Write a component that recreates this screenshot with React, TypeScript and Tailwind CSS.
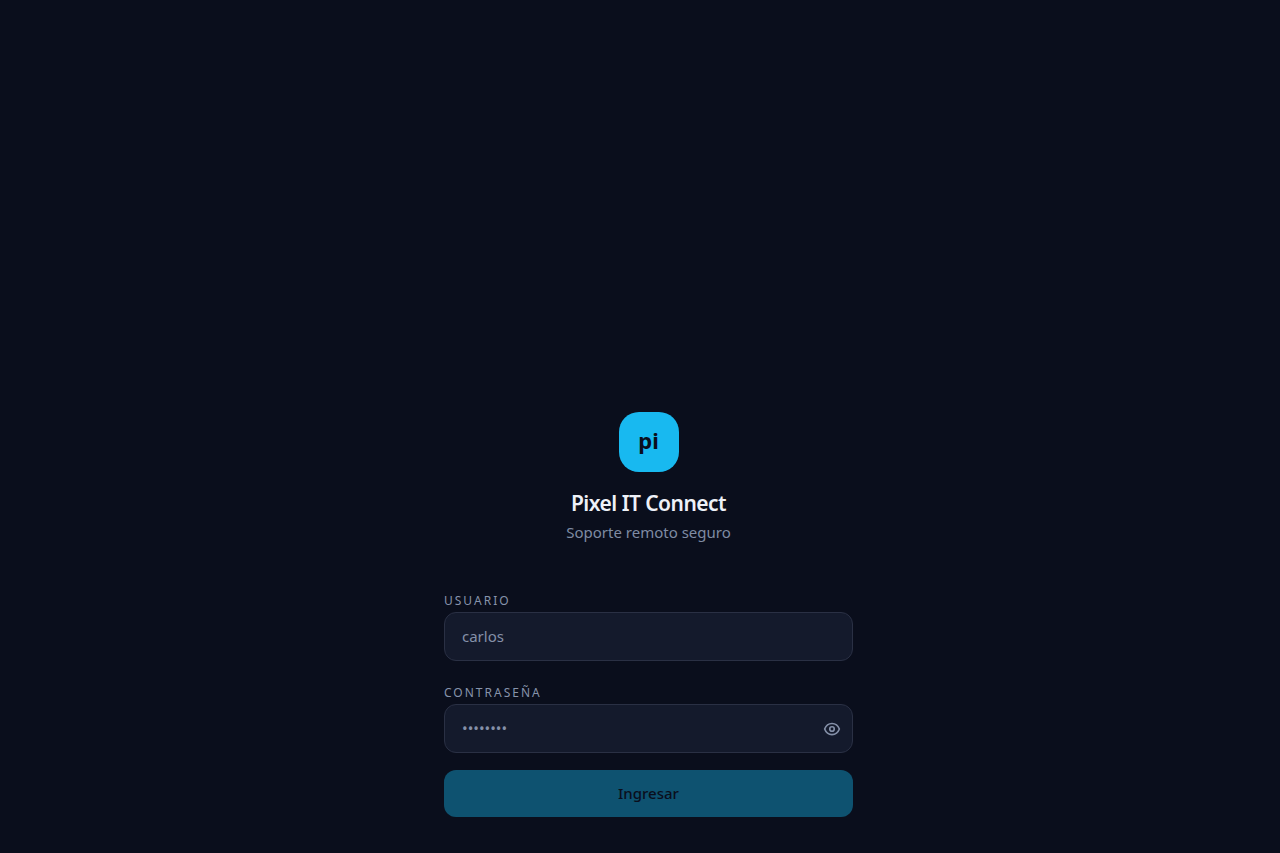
import React, { useState } from 'react';

interface FieldProps {
  id: string;
  label: string;
  type: string;
  placeholder: string;
  value: string;
  onChange: (value: string) => void;
  children?: React.ReactNode;
}

const Field: React.FC<FieldProps> = ({ id, label, type, placeholder, value, onChange, children }) => (
  <div>
    <label htmlFor={id} className="block text-[12px] leading-[20px] tracking-[2px] uppercase text-[#8793ab]">
      {label}
    </label>
    <div className="relative mt-px">
      <input
        id={id}
        type={type}
        placeholder={placeholder}
        value={value}
        onChange={(e) => onChange(e.target.value)}
        className="block w-full h-[49px] px-[17px] pb-[2px] rounded-xl border border-[#2a3044] bg-[#141a2c] text-[15px] text-slate-100 placeholder:text-[#8590a8] outline-none focus:border-[#18b9f0]"
      />
      {children}
    </div>
  </div>
);

const EyeIcon = () => (
  <svg width="18" height="18" viewBox="0 0 24 24" fill="none" stroke="currentColor" strokeWidth="2.2" strokeLinecap="round" strokeLinejoin="round">
    <path d="M2.2 12C4 7.2 7.4 4.6 12 4.6S20 7.2 21.8 12c-1.8 4.8-5.2 7.4-9.8 7.4S4 16.8 2.2 12z" />
    <circle cx="12" cy="12" r="3" />
  </svg>
);

export default function App() {
  const [user, setUser] = useState('');
  const [password, setPassword] = useState('');
  const [visible, setVisible] = useState(false);

  return (
    <main className="min-h-screen bg-[#0a0e1c] pt-[412px] pl-[17px] pb-9 font-['Noto_Sans',sans-serif]">
      <div className="mx-auto w-full max-w-[409px]">
        <header className="flex flex-col items-center text-center">
          <div className="flex size-[60px] items-center justify-center rounded-[20px] bg-[#18b9f0] pb-[3px] text-[22px] font-bold text-[#0a0e1c]">
            pi
          </div>
          <h1 className="mt-4 text-[21px] leading-[30px] font-semibold tracking-tight text-[#eef1f8]">Pixel IT Connect</h1>
          <p className="mt-[3px] text-[15px] leading-[22px] text-[#7f8ba3]">Soporte remoto seguro</p>
        </header>

        <form className="mt-12 flex flex-col gap-[22px]" onSubmit={(e) => e.preventDefault()}>
          <Field id="usuario" label="Usuario" type="text" placeholder="carlos" value={user} onChange={setUser} />
          <Field
            id="contrasena"
            label="Contraseña"
            type={visible ? 'text' : 'password'}
            placeholder="••••••••"
            value={password}
            onChange={setPassword}
          >
            <button
              type="button"
              aria-label="Mostrar contraseña"
              onClick={() => setVisible(!visible)}
              className="absolute inset-y-0 right-3 flex items-center text-[#8590a8]"
            >
              <EyeIcon />
            </button>
          </Field>
          <button
            type="submit"
            disabled={!user || !password}
            className="-mt-[5px] h-[47px] w-full rounded-xl bg-[#18b9f0] text-[15px] font-medium text-[#0a0e1c] disabled:bg-[#0e5270]"
          >
            Ingresar
          </button>
        </form>
      </div>
    </main>
  );
}
